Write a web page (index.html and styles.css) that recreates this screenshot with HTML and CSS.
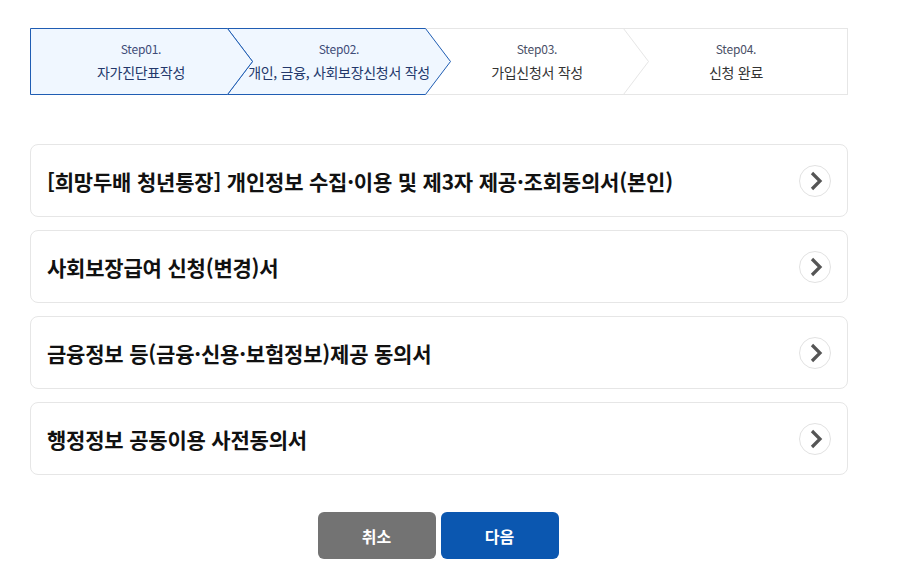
FILE: index.html
```html
<!DOCTYPE html>
<html lang="ko">
<head>
<meta charset="utf-8">
<link rel="stylesheet" href="styles.css">
</head>
<body>
<div class="wrap">
  <div class="stepper">
    <svg class="stepper-bg" width="818" height="67" viewBox="0 0 818 67">
      <rect x="0.5" y="0.5" width="817" height="66" fill="#fff" stroke="#e6e6e6"/>
      <polygon points="197.5,0.5 395.5,0.5 420.5,33.5 395.5,66.5 197.5,66.5 222.5,33.5" fill="#f0f7ff" stroke="#1f5db3"/>
      <polygon points="0.5,0.5 197.5,0.5 222.5,33.5 197.5,66.5 0.5,66.5" fill="#f0f7ff" stroke="#1f5db3"/>
      <polyline points="593.5,0.5 618.5,33.5 593.5,66.5" fill="none" stroke="#e6e6e6"/>
    </svg>
    <div class="step active"><span class="num">Step01.</span><span class="title">자가진단표작성</span></div>
    <div class="step active"><span class="num">Step02.</span><span class="title">개인, 금융, 사회보장신청서 작성</span></div>
    <div class="step"><span class="num">Step03.</span><span class="title">가입신청서 작성</span></div>
    <div class="step last"><span class="num">Step04.</span><span class="title">신청 완료</span></div>
  </div>

  <div class="list">
    <a class="card"><span class="card-title">[희망두배 청년통장] 개인정보 수집·이용 및 제3자 제공·조회동의서(본인)</span><span class="go"><svg width="14" height="20" viewBox="0 0 14 20"><polyline points="3,2 11,10 3,18" fill="none" stroke="#555" stroke-width="3.2"/></svg></span></a>
    <a class="card"><span class="card-title">사회보장급여 신청(변경)서</span><span class="go"><svg width="14" height="20" viewBox="0 0 14 20"><polyline points="3,2 11,10 3,18" fill="none" stroke="#555" stroke-width="3.2"/></svg></span></a>
    <a class="card"><span class="card-title">금융정보 등(금융·신용·보험정보)제공 동의서</span><span class="go"><svg width="14" height="20" viewBox="0 0 14 20"><polyline points="3,2 11,10 3,18" fill="none" stroke="#555" stroke-width="3.2"/></svg></span></a>
    <a class="card"><span class="card-title">행정정보 공동이용 사전동의서</span><span class="go"><svg width="14" height="20" viewBox="0 0 14 20"><polyline points="3,2 11,10 3,18" fill="none" stroke="#555" stroke-width="3.2"/></svg></span></a>
  </div>

  <div class="buttons">
    <button class="btn cancel">취소</button>
    <button class="btn next">다음</button>
  </div>
</div>
</body>
</html>
```
FILE: styles.css
```css
* { box-sizing: border-box; }
html, body { margin: 0; padding: 0; background: #fff; }
body { font-family: "Noto Sans CJK KR", "Noto Sans", sans-serif; color: #333; }
.wrap { width: 818px; margin-left: 30px; padding-top: 28px; }

.stepper { position: relative; display: flex; height: 67px; }
.stepper-bg { position: absolute; left: 0; top: 0; }
.step { position: relative; width: 222px; margin-right: -24px; display: flex; flex-direction: column; align-items: center; padding-top: 13px; }
.step.last { width: 224px; margin-right: 0; }
.step .num { font-size: 12px; line-height: 16px; color: #4a4f66; letter-spacing: -0.2px; }
.step .title { font-size: 14px; line-height: 20px; margin-top: 5px; color: #333; letter-spacing: -0.3px; }
.step.active .num { color: #3f4c78; }
.step.active .title { color: #23386b; }

.list { margin-top: 49px; display: flex; flex-direction: column; gap: 13px; }
.card { display: flex; align-items: center; justify-content: space-between; height: 73px; border: 1px solid #e6e6e6; border-radius: 8px; padding: 0 16px 0 16px; background: #fff; }
.card-title { font-size: 21px; font-weight: 700; color: #111; letter-spacing: -0.2px; }
.go { width: 32px; height: 32px; border-radius: 50%; border: 1px solid #e2e2e2; display: flex; align-items: center; justify-content: center; padding-left: 2px; }

.buttons { display: flex; justify-content: center; gap: 5px; margin: 37px 0 0 -2px; }
.btn { width: 118px; height: 47px; border: 0; border-radius: 6px; color: #fff; font-family: inherit; font-size: 16px; font-weight: 700; }
.btn.cancel { background: #737373; }
.btn.next { background: #0b57b0; }
```
